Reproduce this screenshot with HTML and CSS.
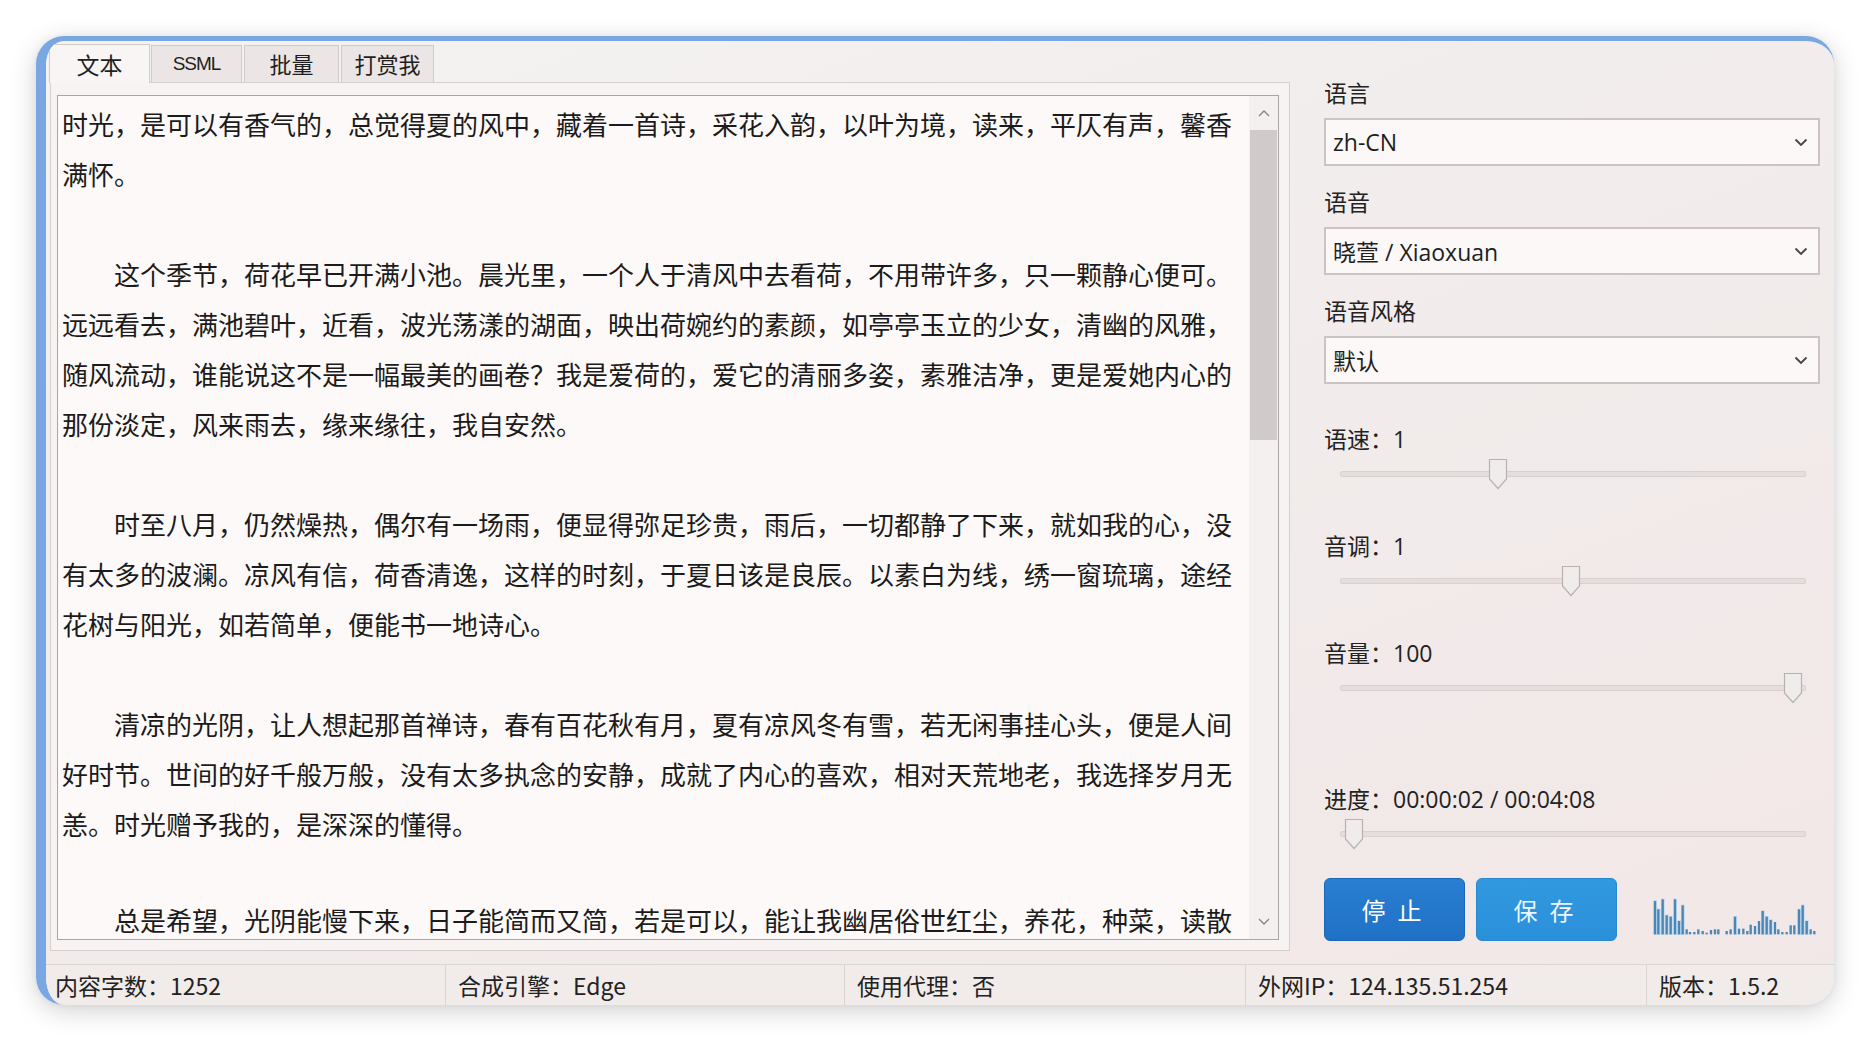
FILE: index.html
```html
<!DOCTYPE html>
<html lang="zh-CN">
<head>
<meta charset="utf-8">
<title>TTS</title>
<link rel="stylesheet" href="styles.css">
</head>
<body>
<div class="window">
  <div class="main">
    <div class="left">
      <div class="tabs">
        <div class="tab active">文本</div>
        <div class="tab t-ssml">SSML</div>
        <div class="tab t-batch">批量</div>
        <div class="tab t-tip">打赏我</div>
      </div>
      <div class="page">
        <div class="editor">
          <div class="text">
            <div class="ln">时光，是可以有香气的，总觉得夏的风中，藏着一首诗，采花入韵，以叶为境，读来，平仄有声，馨香</div>
            <div class="ln">满怀。</div>
            <div class="ln"> </div>
            <div class="ln">　　这个季节，荷花早已开满小池。晨光里，一个人于清风中去看荷，不用带许多，只一颗静心便可。</div>
            <div class="ln">远远看去，满池碧叶，近看，波光荡漾的湖面，映出荷婉约的素颜，如亭亭玉立的少女，清幽的风雅，</div>
            <div class="ln">随风流动，谁能说这不是一幅最美的画卷？我是爱荷的，爱它的清丽多姿，素雅洁净，更是爱她内心的</div>
            <div class="ln">那份淡定，风来雨去，缘来缘往，我自安然。</div>
            <div class="ln"> </div>
            <div class="ln">　　时至八月，仍然燥热，偶尔有一场雨，便显得弥足珍贵，雨后，一切都静了下来，就如我的心，没</div>
            <div class="ln">有太多的波澜。凉风有信，荷香清逸，这样的时刻，于夏日该是良辰。以素白为线，绣一窗琉璃，途经</div>
            <div class="ln">花树与阳光，如若简单，便能书一地诗心。</div>
            <div class="ln"> </div>
            <div class="ln">　　清凉的光阴，让人想起那首禅诗，春有百花秋有月，夏有凉风冬有雪，若无闲事挂心头，便是人间</div>
            <div class="ln">好时节。世间的好千般万般，没有太多执念的安静，成就了内心的喜欢，相对天荒地老，我选择岁月无</div>
            <div class="ln">恙。时光赠予我的，是深深的懂得。</div>
            <div class="ln"> </div>
            <div class="ln last">　　总是希望，光阴能慢下来，日子能简而又简，若是可以，能让我幽居俗世红尘，养花，种菜，读散</div>
          </div>
          <div class="scrollbar">
            <div class="sb-btn">
              <svg width="12" height="8" viewBox="0 0 12 8"><polyline points="1,7 6,2 11,7" fill="none" stroke="#8a8585" stroke-width="1.4"/></svg>
            </div>
            <div class="sb-track"><div class="sb-thumb"></div></div>
            <div class="sb-btn">
              <svg width="12" height="8" viewBox="0 0 12 8"><polyline points="1,1 6,6 11,1" fill="none" stroke="#8a8585" stroke-width="1.4"/></svg>
            </div>
          </div>
        </div>
      </div>
    </div>
    <div class="side">
      <div class="label">语言</div>
      <div class="select"><span>zh-CN</span><svg class="chev" width="14" height="9" viewBox="0 0 14 9"><polyline points="1.5,1.5 7,7 12.5,1.5" fill="none" stroke="#444" stroke-width="1.8"/></svg></div>
      <div class="label gap">语音</div>
      <div class="select"><span>晓萱 / Xiaoxuan</span><svg class="chev" width="14" height="9" viewBox="0 0 14 9"><polyline points="1.5,1.5 7,7 12.5,1.5" fill="none" stroke="#444" stroke-width="1.8"/></svg></div>
      <div class="label gap">语音风格</div>
      <div class="select"><span>默认</span><svg class="chev" width="14" height="9" viewBox="0 0 14 9"><polyline points="1.5,1.5 7,7 12.5,1.5" fill="none" stroke="#444" stroke-width="1.8"/></svg></div>

      <div class="label l-speed">语速：1</div>
      <div class="slider">
        <div class="track"></div>
        <svg class="thumb" style="left: calc(33.8% - 10px)" width="20" height="32" viewBox="0 0 20 32"><path d="M1.5 1.5 H18.5 V21 L10 30.5 L1.5 21 Z" fill="#f1ecec" stroke="#b8b1b0" stroke-width="1.2"/></svg>
      </div>
      <div class="label l-next">音调：1</div>
      <div class="slider">
        <div class="track"></div>
        <svg class="thumb" style="left: calc(49.6% - 10px)" width="20" height="32" viewBox="0 0 20 32"><path d="M1.5 1.5 H18.5 V21 L10 30.5 L1.5 21 Z" fill="#f1ecec" stroke="#b8b1b0" stroke-width="1.2"/></svg>
      </div>
      <div class="label l-next">音量：100</div>
      <div class="slider">
        <div class="track"></div>
        <svg class="thumb" style="left: calc(97.2% - 10px)" width="20" height="32" viewBox="0 0 20 32"><path d="M1.5 1.5 H18.5 V21 L10 30.5 L1.5 21 Z" fill="#f1ecec" stroke="#b8b1b0" stroke-width="1.2"/></svg>
      </div>
      <div class="label l-progress">进度：00:00:02 / 00:04:08</div>
      <div class="slider">
        <div class="track"></div>
        <svg class="thumb" style="left: calc(3% - 10px)" width="20" height="32" viewBox="0 0 20 32"><path d="M1.5 1.5 H18.5 V21 L10 30.5 L1.5 21 Z" fill="#f1ecec" stroke="#b8b1b0" stroke-width="1.2"/></svg>
      </div>
      <div class="actions">
        <button class="btn btn-stop">停止</button>
        <button class="btn btn-save">保存</button>
        <svg class="wave" width="170" height="40" viewBox="30 50 510 120">
          <g fill="#a9d2f2" opacity="0.7">
            <rect x="40" y="63" width="11" height="104"/><rect x="51" y="88" width="11" height="79"/><rect x="63" y="58" width="11" height="109"/><rect x="75" y="106" width="11" height="61"/><rect x="87" y="110" width="11" height="57"/><rect x="100" y="58" width="11" height="109"/><rect x="112" y="123" width="11" height="44"/><rect x="123" y="76" width="11" height="91"/><rect x="280" y="110" width="11" height="57"/><rect x="363" y="93" width="11" height="74"/><rect x="375" y="110" width="11" height="57"/><rect x="387" y="120" width="11" height="47"/><rect x="472" y="88" width="11" height="79"/><rect x="483" y="76" width="11" height="91"/><rect x="495" y="123" width="11" height="44"/>
          </g>
          <g fill="#4b86b5">
            <rect x="41.5" y="65" width="7" height="100"/><rect x="51.5" y="90" width="7" height="75"/><rect x="64.5" y="60" width="7" height="105"/><rect x="76.5" y="108" width="7" height="57"/><rect x="88.5" y="112" width="7" height="53"/><rect x="101.5" y="60" width="7" height="105"/><rect x="113.5" y="125" width="7" height="40"/><rect x="124.5" y="78" width="7" height="87"/><rect x="136.5" y="150" width="7" height="15"/><rect x="146.5" y="158" width="7" height="7"/><rect x="159.5" y="158" width="7" height="7"/><rect x="171.5" y="150" width="7" height="15"/><rect x="184.5" y="155" width="7" height="10"/><rect x="196.5" y="160" width="7" height="5"/><rect x="209.5" y="152" width="7" height="13"/><rect x="221.5" y="150" width="7" height="15"/><rect x="231.5" y="150" width="7" height="15"/><rect x="256.5" y="155" width="7" height="10"/><rect x="268.5" y="150" width="7" height="15"/><rect x="281.5" y="112" width="7" height="53"/><rect x="293.5" y="148" width="7" height="17"/><rect x="306.5" y="148" width="7" height="17"/><rect x="318.5" y="155" width="7" height="10"/><rect x="328.5" y="136" width="7" height="29"/><rect x="341.5" y="140" width="7" height="25"/><rect x="353.5" y="125" width="7" height="40"/><rect x="364.5" y="95" width="7" height="70"/><rect x="376.5" y="112" width="7" height="53"/><rect x="388.5" y="122" width="7" height="43"/><rect x="401.5" y="128" width="7" height="37"/><rect x="411.5" y="150" width="7" height="15"/><rect x="423.5" y="158" width="7" height="7"/><rect x="436.5" y="158" width="7" height="7"/><rect x="448.5" y="138" width="7" height="27"/><rect x="459.5" y="138" width="7" height="27"/><rect x="473.5" y="90" width="7" height="75"/><rect x="484.5" y="78" width="7" height="87"/><rect x="496.5" y="125" width="7" height="40"/><rect x="508.5" y="150" width="7" height="15"/><rect x="519.5" y="155" width="7" height="10"/>
          </g>
        </svg>
      </div>
    </div>
  </div>
  <div class="status">
    <div class="cell first">内容字数：1252</div>
    <div class="cell">合成引擎：Edge</div>
    <div class="cell">使用代理：否</div>
    <div class="cell">外网IP：124.135.51.254</div>
    <div class="cell">版本：1.5.2</div>
  </div>
</div>
</body>
</html>
```

FILE: styles.css
```css
* { box-sizing: border-box; }

html, body {
  margin: 0;
  padding: 0;
}

body {
  width: 1870px;
  height: 1042px;
  background: #ffffff;
  padding: 36px 0 0 36px;
  font-family: "Noto Sans CJK SC", "Noto Sans", sans-serif;
  color: #1c1c1c;
  overflow: hidden;
}

.window {
  width: 1798px;
  height: 969px;
  border-top: 5px solid #78a7e2;
  border-left: 10px solid #78a7e2;
  border-radius: 28px;
  background: linear-gradient(160deg, #f4f2f2 0%, #f2ecec 45%, #f1e7e6 100%);
  box-shadow: 0 6px 26px rgba(0, 0, 0, 0.18), 0 0 6px rgba(0, 0, 0, 0.06);
  overflow: hidden;
  display: flex;
  flex-direction: column;
}

.main {
  height: 923px;
  display: flex;
}

/* ---------- left: tabs + editor ---------- */
.left {
  width: 1244px;
  display: flex;
  flex-direction: column;
}

.tabs {
  height: 41px;
  padding-left: 3px;
  display: flex;
  align-items: flex-end;
  gap: 1px;
}

.tab {
  height: 37px;
  border: 1px solid #d2cbca;
  border-bottom: none;
  background: #ebe6e5;
  font-size: 22px;
  line-height: 35px;
  text-align: center;
  color: #1f1f1f;
  position: relative;
  z-index: 1;
}

.tab.active {
  width: 101px;
  height: 39px;
  background: #f8f5f4;
  margin-bottom: -1px;
  z-index: 2;
  font-size: 23px;
  line-height: 38px;
}

.t-ssml {
  width: 91px;
  font-family: "Liberation Sans Narrow", "Liberation Sans", sans-serif;
  font-size: 19px;
  letter-spacing: -1px;
}

.t-batch {
  width: 95px;
  margin-left: 1px;
}

.t-tip {
  width: 93px;
  margin-left: 1px;
}

.page {
  margin-left: 4px;
  width: 1240px;
  height: 869px;
  border: 1px solid #d6cfce;
  background: #f7f3f2;
  padding: 12px 10px 10px 6px;
}

.editor {
  width: 1222px;
  height: 845px;
  border: 1px solid #aba5a4;
  background: #fdf9f8;
  display: flex;
  overflow: hidden;
}

.text {
  flex: 1;
  padding: 3px 0 0 4px;
  font-size: 26px;
  line-height: 50px;
  color: #1b1b1b;
  overflow: hidden;
}

.ln {
  height: 50px;
  white-space: pre;
}

.ln.last {
  height: 40px;
  line-height: 40px;
  padding-top: 0;
  position: relative;
  top: 1px;
}

.scrollbar {
  width: 29px;
  background: #f4f0ef;
  display: flex;
  flex-direction: column;
}

.sb-btn {
  height: 34px;
  display: flex;
  align-items: center;
  justify-content: center;
}

.sb-track {
  flex: 1;
}

.sb-thumb {
  margin: 0 1px;
  height: 310px;
  background: #d0cbca;
}

/* ---------- right side ---------- */
.side {
  flex: 1;
  padding: 37px 18px 0 34px;
  display: flex;
  flex-direction: column;
}

.label {
  font-family: "Open Sans", "Noto Sans CJK SC", sans-serif;
  font-size: 23px;
  line-height: 30px;
  height: 30px;
  color: #222;
  white-space: nowrap;
}

.label.gap { margin-top: 21px; }

.select {
  margin-top: 10px;
  height: 48px;
  border: 2px solid #cbc4c3;
  background: #fbf8f7;
  display: flex;
  align-items: center;
  justify-content: space-between;
  padding: 0 10px 0 7px;
  font-family: "Open Sans", "Noto Sans CJK SC", sans-serif;
  font-size: 23px;
  color: #1e1e1e;
}

.chev { margin-top: 1px; }

.l-speed { margin-top: 40px; }
.l-next { margin-top: 37px; }
.l-progress { margin-top: 76px; }

.slider {
  position: relative;
  height: 40px;
  margin: 0 14px 0 16px;
}

.track {
  position: relative;
  top: 17px;
  height: 6px;
  background: #e5dedd;
  border: 1px solid #d9d1d0;
  border-radius: 2px;
}

.thumb {
  position: absolute;
  top: 4px;
}

.actions {
  margin-top: 24px;
  display: flex;
  align-items: flex-end;
}

.btn {
  width: 141px;
  height: 63px;
  border-radius: 6px;
  color: #ffffff;
  font-family: "Noto Sans CJK SC", sans-serif;
  font-size: 24px;
  letter-spacing: 12px;
  padding-left: 12px;
  cursor: pointer;
}

.btn-stop {
  background: linear-gradient(#2a7fd3, #1f71c4);
  border: 1px solid #1a67b8;
}

.btn-save {
  margin-left: 11px;
  background: linear-gradient(#3199e0, #2a90da);
  border: 1px solid #2787cf;
  color: #eef6fd;
}

.wave {
  margin-left: 33px;
  margin-bottom: 5px;
}

/* ---------- status bar ---------- */
.status {
  flex: 1;
  border-top: 1px solid #dcd5d4;
  background: #f1ebea;
  display: grid;
  grid-template-columns: 399px 399px 401px 401px 1fr;
  font-size: 23px;
  line-height: 40px;
  color: #222;
}

.cell {
  padding-left: 12px;
  border-left: 1px solid #dbd4d3;
  white-space: nowrap;
}

.cell.first {
  border-left: none;
  padding-left: 9px;
}
```
